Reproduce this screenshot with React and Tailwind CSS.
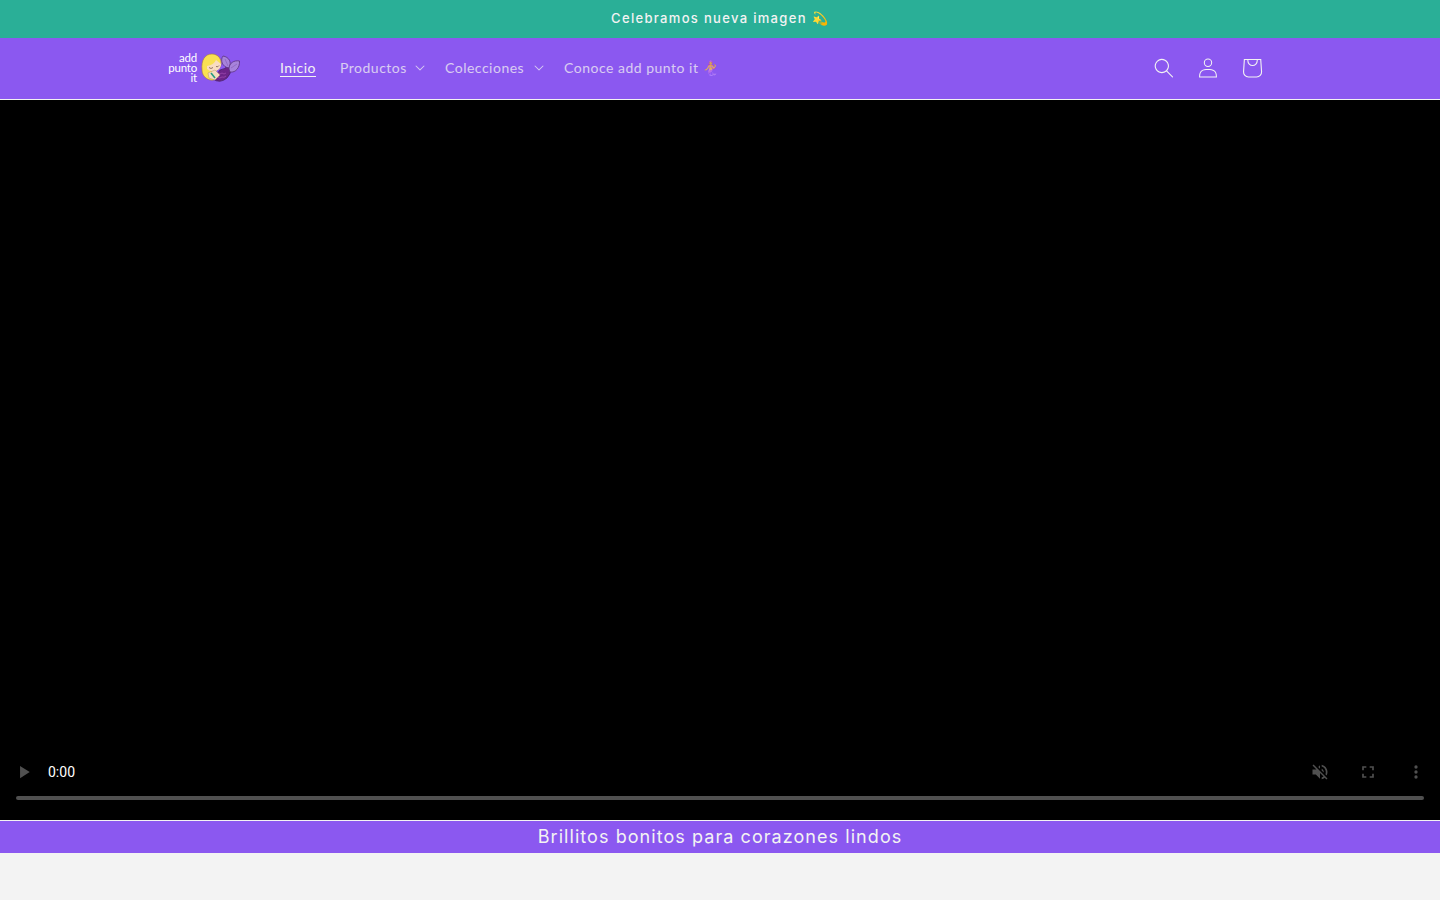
function Caret() {
  return (
    <svg viewBox="0 0 10 6" className="mt-[1px] h-[6px] w-[10px] shrink-0 fill-[#f3f3f3]">
      <path fillRule="evenodd" d="M9.354.646a.5.5 0 00-.708 0L5 4.293 1.354.646a.5.5 0 00-.708.708l4 4a.5.5 0 00.708 0l4-4a.5.5 0 000-.708z" />
    </svg>
  );
}

function Logo() {
  return (
    <div className="flex w-[72px] items-center">
      <div className="w-[29px] pt-[1px] text-right font-['Lato',sans-serif] text-[11.5px] leading-[10px] tracking-[-0.2px] text-white">
        <div>add</div>
        <div>punto</div>
        <div>it</div>
      </div>
      <svg viewBox="0 0 40 34" className="ml-[3px] h-[34px] w-[40px] shrink-0">
        <path d="M13 28Q20 33 27 27Q31 23 31 17L28 15Q25 18 20 19Z" fill="#6d2389" stroke="#43205f" strokeWidth=".7" />
        <path d="M18 22q2 2 4 0q2 2 4 0M17 26q3 2 5 0q2 1 4-1" fill="none" stroke="#a34db5" strokeWidth=".7" />
        <path d="M29 17C22 16 20 9 23 5C29 6 32 11 29 17Z" fill="#a783dc" stroke="#5c337d" strokeWidth=".8" />
        <path d="M29 18C29 12 34 9 39.500 10C40 16 36 22 30 21Z" fill="#a783dc" stroke="#5c337d" strokeWidth=".8" />
        <path d="M25 8l3 7M31 17l6-4" fill="none" stroke="#7e52ab" strokeWidth=".5" />
        <path d="M2 19C1 9 5 3 12 3C18 3 22 8 21 14C20 18 17 19 15 20L14 29C7 30 2 25 2 19Z" fill="#f9e052" stroke="#a47b3d" strokeWidth=".6" />
        <path d="M7 15Q14 14 16 9L21 13Q21 18 16 20Q10 21 7 18Z" fill="#f9dcc0" />
        <path d="M9 16.500q2 2 4 0m3-1q2 1 3-1" fill="none" stroke="#65433b" strokeWidth=".7" />
        <path d="M8 22L15 19L20 24L15 29L9 27Z" fill="#f6dbc0" stroke="#a8805d" strokeWidth=".4" />
        <path d="M11 22l4 5" stroke="#239c7e" strokeWidth="1.6" />
      </svg>
    </div>
  );
}

export default function App() {
  return (
    <div className="flex h-[900px] w-full flex-col overflow-hidden bg-[#f3f3f3] font-['Inter',sans-serif]">
      <div className="flex h-[38px] items-center justify-center bg-[#2aaf97] pb-[2px]">
        <p className="text-[13px] leading-[22px] font-medium tracking-[1.32px] whitespace-nowrap text-[#f3f3f3]">Celebramos nueva imagen 💫</p>
      </div>
      <header className="flex h-[62px] items-center border-b border-[#f3f3f3] bg-[#8b58f0] pr-[166px] pb-[2px] pl-[168px] text-[#f3f3f3]">
        <Logo />
        <nav className="flex h-full flex-1 items-center pl-[40px] font-['Lato',sans-serif] text-[14px] leading-[18px] tracking-[0.5px] whitespace-nowrap">
          <a className="w-[60px]"><span className="underline underline-offset-[3px]">Inicio</span></a>
          <a className="flex w-[105px] items-center opacity-75"><span className="w-[75px]">Productos</span><Caret /></a>
          <a className="flex w-[119px] items-center opacity-75"><span className="w-[89px]">Colecciones</span><Caret /></a>
          <a className="opacity-75">Conoce add punto it 🧜‍♀️</a>
        </nav>
        <div className="flex items-center fill-[#f3f3f3]">
          <div className="flex size-[44px] items-center justify-center">
            <svg viewBox="0 0 18 19" className="size-[20px]"><path fillRule="evenodd" d="M11.03 11.68A5.784 5.784 0 112.85 3.5a5.784 5.784 0 018.18 8.18zm.26 1.12a6.78 6.78 0 11.72-.7l5.4 5.4a.5.5 0 11-.71.7l-5.41-5.4z" /></svg>
          </div>
          <div className="flex size-[44px] items-center justify-center">
            <svg viewBox="0 0 18 19" className="size-[20px]"><path fillRule="evenodd" d="M6 4.5a3 3 0 116 0 3 3 0 01-6 0zm3-4a4 4 0 100 8 4 4 0 000-8zm5.58 12.15c1.12.82 1.83 2.24 1.91 4.85H1.51c.08-2.6.79-4.03 1.9-4.85C4.66 11.75 6.5 11.5 9 11.5s4.35.26 5.58 1.15zM9 10.5c-2.5 0-4.65.24-6.17 1.35C1.27 12.98.5 14.93.5 18v.5h17V18c0-3.07-.77-5.02-2.33-6.15-1.52-1.1-3.67-1.35-6.17-1.35z" /></svg>
          </div>
          <svg viewBox="0 0 40 40" className="size-[44px]"><path fillRule="evenodd" d="M15.75 11.8h-3.16l-.77 11.6a5 5 0 004.99 5.34h7.38a5 5 0 004.99-5.33L28.4 11.8zm0 1h-2.22l-.71 10.67a4 4 0 003.99 4.27h7.38a4 4 0 004-4.27l-.72-10.67h-2.22v.63a4.75 4.75 0 11-9.5 0zm8.5 0h-7.5v.63a3.75 3.75 0 107.5 0z" /></svg>
        </div>
      </header>
      <main className="flex h-[720px] shrink-0 flex-col justify-end bg-black">
        <div className="flex h-[48px] items-center justify-between">
          <div className="flex items-center">
            <svg viewBox="0 0 24 24" className="ml-[12px] size-[24px] fill-[#505050]"><path d="M8 5v14l11-7z" transform="translate(1 1.5) scale(.88)" /></svg>
            <span className="ml-[12px] font-['Roboto',sans-serif] text-[14px] text-white">0:00</span>
          </div>
          <div className="flex items-center gap-[28px] pr-[14px] fill-[#505050]">
            <svg viewBox="0 0 24 24" className="size-[20px]"><path d="M16.5 12c0-1.77-1.02-3.29-2.5-4.03v2.21l2.45 2.45c.03-.2.05-.41.05-.63zm2.5 0c0 .94-.2 1.82-.54 2.64l1.51 1.51C20.63 14.91 21 13.5 21 12c0-4.28-2.99-7.86-7-8.77v2.06c2.89.86 5 3.54 5 6.71zM4.27 3L3 4.27 7.73 9H3v6h4l5 5v-6.73l4.25 4.25c-.67.52-1.42.93-2.25 1.18v2.06c1.38-.31 2.63-.95 3.69-1.81L19.73 21 21 19.73l-9-9L4.27 3zM12 4L9.91 6.09 12 8.18V4z" /></svg>
            <svg viewBox="0 0 24 24" className="size-[20px]"><path d="M7 14H5v5h5v-2H7v-3zm-2-4h2V7h3V5H5v5zm12 7h-3v2h5v-5h-2v3zM14 5v2h3v3h2V5h-5z" /></svg>
            <svg viewBox="0 0 24 24" className="size-[20px]"><path d="M12 8a2 2 0 100-4 2 2 0 000 4zm0 2a2 2 0 100 4 2 2 0 000-4zm0 6a2 2 0 100 4 2 2 0 000-4z" /></svg>
          </div>
        </div>
        <div className="mx-[16px] mb-[20px] h-[4px] rounded-full bg-[#505050]" />
      </main>
      <section className="flex h-[33px] shrink-0 items-center justify-center border-t border-[#f3f3f3] bg-[#8b58f0]">
        <h2 className="text-[18px] leading-[24px] tracking-[1.06px] whitespace-nowrap text-[#f3f3f3]">Brillitos bonitos para corazones lindos</h2>
      </section>
    </div>
  );
}
